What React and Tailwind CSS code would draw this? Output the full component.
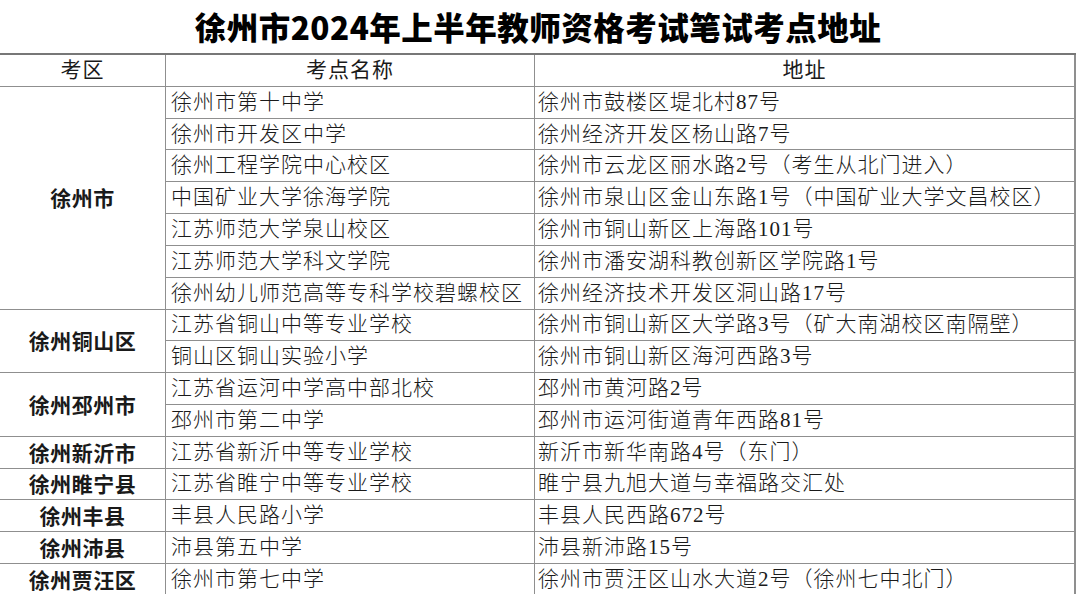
import React from "react";

const groups = [
  { region: "徐州市", rows: [
    ["徐州市第十中学", "徐州市鼓楼区堤北村87号"],
    ["徐州市开发区中学", "徐州经济开发区杨山路7号"],
    ["徐州工程学院中心校区", "徐州市云龙区丽水路2号（考生从北门进入）"],
    ["中国矿业大学徐海学院", "徐州市泉山区金山东路1号（中国矿业大学文昌校区）"],
    ["江苏师范大学泉山校区", "徐州市铜山新区上海路101号"],
    ["江苏师范大学科文学院", "徐州市潘安湖科教创新区学院路1号"],
    ["徐州幼儿师范高等专科学校碧螺校区", "徐州经济技术开发区洞山路17号"],
  ]},
  { region: "徐州铜山区", rows: [
    ["江苏省铜山中等专业学校", "徐州市铜山新区大学路3号（矿大南湖校区南隔壁）"],
    ["铜山区铜山实验小学", "徐州市铜山新区海河西路3号"],
  ]},
  { region: "徐州邳州市", rows: [
    ["江苏省运河中学高中部北校", "邳州市黄河路2号"],
    ["邳州市第二中学", "邳州市运河街道青年西路81号"],
  ]},
  { region: "徐州新沂市", rows: [["江苏省新沂中等专业学校", "新沂市新华南路4号（东门）"]] },
  { region: "徐州睢宁县", rows: [["江苏省睢宁中等专业学校", "睢宁县九旭大道与幸福路交汇处"]] },
  { region: "徐州丰县", rows: [["丰县人民路小学", "丰县人民西路672号"]] },
  { region: "徐州沛县", rows: [["沛县第五中学", "沛县新沛路15号"]] },
  { region: "徐州贾汪区", rows: [["徐州市第七中学", "徐州市贾汪区山水大道2号（徐州七中北门）"]] },
];

const span = { 1: "row-span-1", 2: "row-span-2", 7: "row-span-7" };

export default function App() {
  const bodyFont = { fontFamily: '"Liberation Serif", "Noto Sans CJK SC", serif' };
  return (
    <div className="w-[1080px] h-[594px] bg-white overflow-hidden text-[#1a1a1a]">
      <div
        className="h-[53px] flex items-center justify-center text-[31.5px] font-black text-black tracking-[0.5px] pr-[4px]"
        style={{ fontFamily: '"Noto Sans CJK SC", sans-serif' }}
      >
        徐州市2024年上半年教师资格考试笔试考点地址
      </div>
      <div
        className="w-[1076px] grid grid-cols-[166px_369px_1fr] grid-rows-[repeat(17,31.82px)] border-t-2 border-[#777] text-[21px] leading-none"
        style={bodyFont}
      >
        <div className="border-r border-b border-[#8f8f8f] flex items-center justify-center tracking-[1px]">考区</div>
        <div className="border-r border-b border-[#8f8f8f] flex items-center justify-center tracking-[1px]">考点名称</div>
        <div className="border-r-2 border-b border-[#8f8f8f] flex items-center justify-center tracking-[1px]">地址</div>
        {groups.map((g) => (
          <React.Fragment key={g.region}>
            <div
              className={`${span[g.rows.length]} border-r border-b border-[#8f8f8f] flex items-center justify-center font-semibold text-[21px] tracking-[0.5px]`}
              style={{ fontFamily: '"Noto Sans CJK SC", sans-serif' }}
            >
              {g.region}
            </div>
            {g.rows.map(([n, a]) => (
              <React.Fragment key={n}>
                <div className="border-r border-b border-[#8f8f8f] flex items-center pl-[5px] font-light tracking-[1px] whitespace-nowrap overflow-hidden">{n}</div>
                <div className="border-r-2 border-b border-[#8f8f8f] flex items-center pl-[3px] font-light tracking-[1px] whitespace-nowrap overflow-hidden">{a}</div>
              </React.Fragment>
            ))}
          </React.Fragment>
        ))}
      </div>
    </div>
  );
}
